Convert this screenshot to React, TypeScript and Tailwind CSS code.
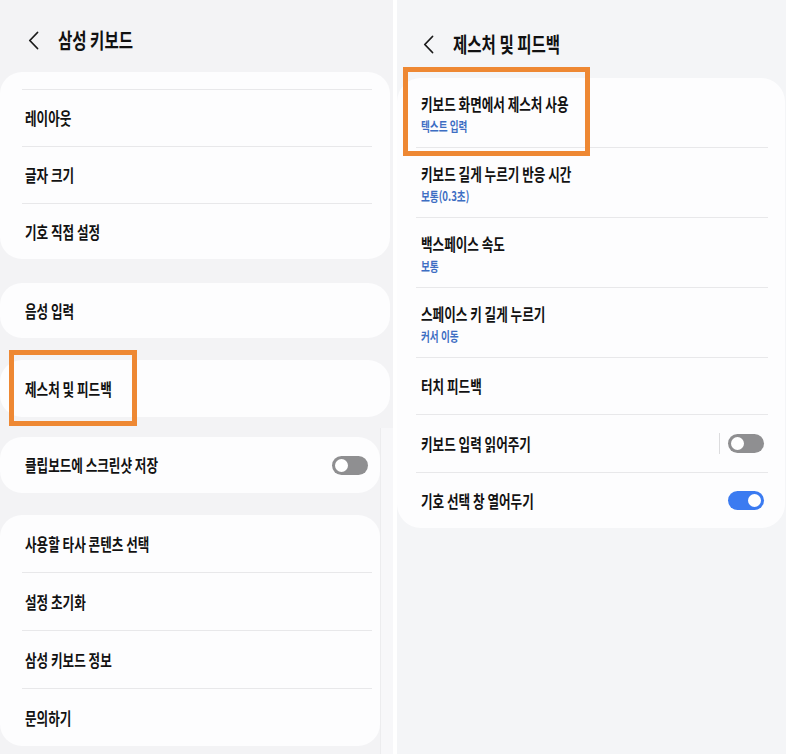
import React from 'react';

const font = { fontFamily: '"Noto Sans CJK KR", "Noto Sans", sans-serif' };

function Label({ children, className = '' }: { children: React.ReactNode; className?: string }) {
  return (
    <span className={`inline-block origin-left scale-x-[0.74] whitespace-nowrap ${className}`}>
      {children}
    </span>
  );
}

function Chevron() {
  return (
    <svg width="11" height="19" viewBox="0 0 11 19" fill="none">
      <path d="M9.5 1.5 L1.8 9.5 L9.5 17.5" stroke="#1a1a1a" strokeWidth="1.8" strokeLinecap="round" strokeLinejoin="round" />
    </svg>
  );
}

function Toggle({ on }: { on: boolean }) {
  return on ? (
    <div className="w-[36px] h-[19px] rounded-full bg-[#3b7bf1] flex items-center justify-end pr-[1px]">
      <div className="w-[17px] h-[17px] rounded-full bg-white border-[2px] border-[#3b7bf1]" />
    </div>
  ) : (
    <div className="w-[36px] h-[19px] rounded-full bg-[#8f8f91] flex items-center pl-[1px]">
      <div className="w-[17px] h-[17px] rounded-full bg-white border-[2px] border-[#8f8f91]" />
    </div>
  );
}

function Divider({ className }: { className: string }) {
  return <div className={`h-px bg-[#e8e8ea] ${className}`} />;
}

function LeftRow({ title, h, toggle }: { title: string; h: string; toggle?: boolean }) {
  return (
    <div className={`${h} flex items-center justify-between pl-[25px] pr-[12px]`}>
      <Label className="text-[17px] font-bold text-[#121212]">{title}</Label>
      {toggle !== undefined && <Toggle on={toggle} />}
    </div>
  );
}

type RightItem = { title: string; sub?: string; toggle?: boolean; sep?: boolean; h?: string };

const rightItems: RightItem[] = [
  { title: '키보드 화면에서 제스처 사용', sub: '텍스트 입력' },
  { title: '키보드 길게 누르기 반응 시간', sub: '보통(0.3초)' },
  { title: '백스페이스 속도', sub: '보통' },
  { title: '스페이스 키 길게 누르기', sub: '커서 이동' },
  { title: '터치 피드백', h: 'h-[56px]' },
  { title: '키보드 입력 읽어주기', toggle: false, sep: true, h: 'h-[57px]' },
  { title: '기호 선택 창 열어두기', toggle: true, h: 'h-[55px]' },
];

export default function App() {
  return (
    <div className="relative w-[786px] h-[754px] flex bg-white overflow-hidden" style={font}>
      {/* left screen */}
      <div className="relative w-[393px] h-full bg-[#f3f3f5] overflow-hidden">
        <div className="h-[72px] flex items-center pl-[28px] pt-[8px]">
          <Chevron />
          <Label className="ml-[19px] text-[21px] font-bold text-[#111]">삼성 키보드</Label>
        </div>

        <div className="w-[390px] rounded-[22px] bg-[#fdfdfe] pt-[17px]">
          <Divider className="ml-[22px] mr-[18px]" />
          <LeftRow title="레이아웃" h="h-[56px]" />
          <Divider className="ml-[22px] mr-[18px]" />
          <LeftRow title="글자 크기" h="h-[56px]" />
          <Divider className="ml-[22px] mr-[18px]" />
          <LeftRow title="기호 직접 설정" h="h-[55px]" />
        </div>

        <div className="mt-[24px] w-[390px] rounded-[22px] bg-[#fdfdfe]">
          <LeftRow title="음성 입력" h="h-[55px]" />
        </div>

        <div className="mt-[22px] w-[390px] rounded-[22px] bg-[#fdfdfe]">
          <LeftRow title="제스처 및 피드백" h="h-[57px]" />
        </div>

        <div className="mt-[20px] w-[380px] rounded-[22px] bg-[#fdfdfe]">
          <LeftRow title="클립보드에 스크린샷 저장" h="h-[56px]" toggle={false} />
        </div>

        <div className="mt-[22px] w-[380px] rounded-[22px] bg-[#fdfdfe]">
          <LeftRow title="사용할 타사 콘텐츠 선택" h="h-[57px]" />
          <Divider className="ml-[22px] mr-[8px]" />
          <LeftRow title="설정 초기화" h="h-[57px]" />
          <Divider className="ml-[22px] mr-[8px]" />
          <LeftRow title="삼성 키보드 정보" h="h-[57px]" />
          <Divider className="ml-[22px] mr-[8px]" />
          <LeftRow title="문의하기" h="h-[57px]" />
        </div>

        {/* edge scroll strip */}
        <div className="absolute right-0 top-[428px] bottom-0 w-[13px] bg-[#f7f7f9] border-l border-[#ececee]" />
      </div>

      {/* gap */}
      <div className="w-[4px] h-full bg-white" />

      {/* right screen */}
      <div className="flex-1 h-full bg-[#f4f5f7]">
        <div className="h-[78px] flex items-center pl-[26px] pt-[10px]">
          <Chevron />
          <Label className="ml-[19px] text-[21px] font-bold text-[#111]">제스처 및 피드백</Label>
        </div>

        <div className="w-[388px] rounded-[24px] bg-[#fdfdfe]">
          {rightItems.map((item, i) => (
            <div key={item.title}>
              {i > 0 && <Divider className="ml-[19px] mr-[17px]" />}
              {item.sub ? (
                <div className="pt-[13px] pb-[12px] pl-[24px] flex flex-col">
                  <Label className="text-[17px] leading-[25px] font-bold text-[#121212]">{item.title}</Label>
                  <Label className="text-[13px] leading-[19px] font-bold text-[#3d6ec3]">{item.sub}</Label>
                </div>
              ) : (
                <div className={`${item.h} flex items-center justify-between pl-[24px] pr-[21px]`}>
                  <Label className="text-[17px] font-bold text-[#121212]">{item.title}</Label>
                  {item.toggle !== undefined && (
                    <div className="flex items-center">
                      {item.sep && <div className="w-px h-[21px] bg-[#dcdcde] mr-[8px]" />}
                      <Toggle on={item.toggle} />
                    </div>
                  )}
                </div>
              )}
            </div>
          ))}
        </div>
      </div>

      {/* highlight boxes */}
      <div className="absolute left-[9px] top-[350px] w-[128px] h-[76px] border-[5px] border-[#ee8833]" />
      <div className="absolute left-[403px] top-[67px] w-[187px] h-[89px] border-[5px] border-[#ee8833]" />
    </div>
  );
}
